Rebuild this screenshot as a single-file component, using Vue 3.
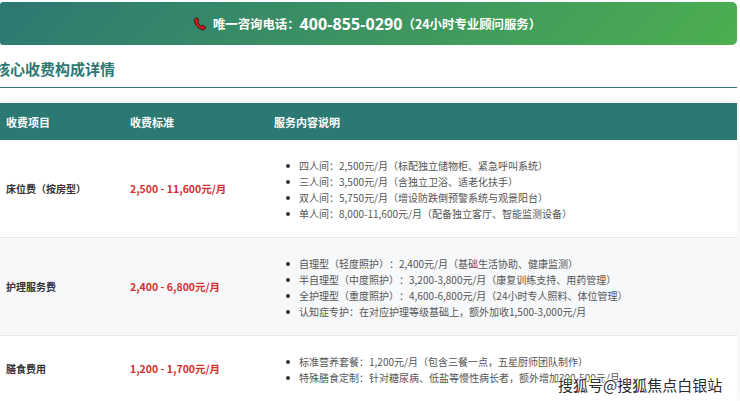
<script setup>
const rows = [
  { name: '床位费（按房型）', price: '2,500 - 11,600元/月', items: [
    '四人间：2,500元/月（标配独立储物柜、紧急呼叫系统）',
    '三人间：3,500元/月（含独立卫浴、适老化扶手）',
    '双人间：5,750元/月（增设防跌倒预警系统与观景阳台）',
    '单人间：8,000-11,600元/月（配备独立客厅、智能监测设备）'
  ]},
  { name: '护理服务费', price: '2,400 - 6,800元/月', alt: true, items: [
    '自理型（轻度照护）：2,400元/月（基础生活协助、健康监测）',
    '半自理型（中度照护）：3,200-3,800元/月（康复训练支持、用药管理）',
    '全护理型（重度照护）：4,600-6,800元/月（24小时专人照料、体位管理）',
    '认知症专护：在对应护理等级基础上，额外加收1,500-3,000元/月'
  ]},
  { name: '膳食费用', price: '1,200 - 1,700元/月', items: [
    '标准营养套餐：1,200元/月（包含三餐一点，五星厨师团队制作）',
    '特殊膳食定制：针对糖尿病、低盐等慢性病长者，额外增加300-500元/月'
  ]}
]
</script>

<template>
  <div class="page">
    <div class="banner">
      <svg class="phone" viewBox="0 0 16 16" width="14" height="14">
        <path d="M3.2 1.2 5 .8l1.6 3.4-1.3 1.2c.6 2 2.2 3.9 4.3 5l1.4-1.1 3.4 2.2-.5 1.9c-.4 1.2-1.9 1.8-3.4 1.3C5.9 13.2 2.2 9 1.4 4.7c-.3-1.6.5-3 1.8-3.5Z" fill="#d81616" stroke="#2a1a1a" stroke-width="1"/>
      </svg>
      <span class="lead">唯一咨询电话：</span>
      <span class="tel">400-855-0290</span>
      <span class="lead">（24小时专业顾问服务）</span>
    </div>
    <h2 class="title">核心收费构成详情</h2>
    <table class="fees">
      <colgroup>
        <col class="c1" /><col class="c2" /><col />
      </colgroup>
      <thead>
        <tr><th>收费项目</th><th>收费标准</th><th>服务内容说明</th></tr>
      </thead>
      <tbody>
        <tr v-for="r in rows" :key="r.name" :class="{ alt: r.alt }">
          <td class="name">{{ r.name }}</td>
          <td class="price">{{ r.price }}</td>
          <td class="detail">
            <ul><li v-for="i in r.items" :key="i">{{ i }}</li></ul>
          </td>
        </tr>
      </tbody>
    </table>
    <div class="mark">搜狐号@搜狐焦点白银站</div>
  </div>
</template>

<style>
html, body { margin: 0; background: #fff; overflow: hidden; }
</style>

<style scoped>
.page {
  position: relative;
  width: 740px;
  height: 401px;
  overflow: hidden;
  font-family: "Noto Sans CJK SC", "Open Sans", sans-serif;
  text-spacing-trim: space-all;
  background: #fff;
}
.banner {
  margin: 2px 3px 0 0;
  padding-right: 3px;
  height: 43px;
  border-radius: 3px 5px 5px 3px;
  background: linear-gradient(135deg, #2c7873, #4caf50);
  color: #fff;
  font-weight: 700;
  font-size: 12.4px;
  display: flex;
  align-items: center;
  justify-content: center;
}
.phone { margin-right: 6px; }
.tel {
  font-size: 16px;
  letter-spacing: 0.1px;
  font-family: "Open Sans", "Noto Sans", sans-serif;
  font-weight: 700;
}
.title {
  margin: 14px 3px 0 -5px;
  padding-bottom: 8px;
  height: 20px;
  line-height: 20px;
  font-size: 15px;
  font-weight: 700;
  color: #2c7873;
  border-bottom: 1px solid #2c7873;
}
.fees {
  width: 737px;
  margin-top: 15px;
  border-collapse: collapse;
  table-layout: fixed;
  font-size: 10px;
  box-shadow: 0 0 12px rgba(0, 0, 0, 0.07);
}
.c1 { width: 124px; }
.c2 { width: 144px; }
th {
  height: 37px;
  padding: 0 6px;
  background: #2c7873;
  color: #fff;
  text-align: left;
  font-size: 11px;
  font-weight: 700;
}
tbody tr { border-bottom: 1px solid #e6e8ea; }
.alt { background: #f6f8fa; }
td { padding: 0 6px; }
.name { font-weight: 600; color: #333; }
.price { font-weight: 700; color: #d32f2f; font-size: 10.5px; }
.detail { padding-top: 18px; padding-bottom: 15px; color: #555; }
ul { margin: 0; padding: 0 0 0 25px; list-style: none; }
li { position: relative; line-height: 16px; white-space: nowrap; }
li::before {
  content: "";
  position: absolute;
  left: -13px;
  top: 6px;
  width: 4px;
  height: 4px;
  border-radius: 50%;
  background: #333;
}
.mark {
  position: absolute;
  left: 558px;
  top: 375px;
  font-size: 15px;
  line-height: 20px;
  white-space: nowrap;
  color: #2b2b2b;
  text-shadow: 0 0 2px #fff, 0 0 2px #fff, 1px 1px 1px #fff, -1px -1px 1px #fff;
}
</style>
